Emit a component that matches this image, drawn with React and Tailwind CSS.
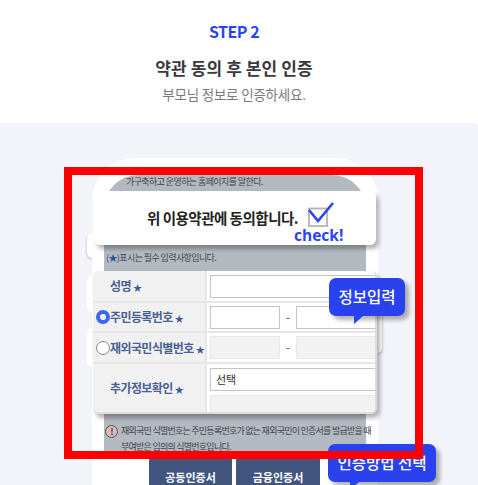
const font = { fontFamily: '"Noto Sans CJK KR", "Noto Sans", sans-serif' };

function Star() {
  return <span className="ml-[2px] text-[9px] text-[#3f5a99]">★</span>;
}

function Bubble({ className, tailClass, children }) {
  return (
    <div className={`absolute flex items-center justify-center rounded-[7px] bg-[#2a42ee] text-[15.5px] font-medium text-white shadow-[4px_4px_4px_rgba(0,0,0,0.3)] ${className}`}>
      {children}
      <span className={`absolute top-full h-0 w-0 border-t-[8px] border-r-[9px] border-t-[#2a42ee] border-r-transparent ${tailClass}`} />
    </div>
  );
}

function FormRow({ label, radio, className, children }) {
  return (
    <div className={`flex border-b-2 border-[#e6e6e6] ${className}`}>
      <div className="flex w-[114px] shrink-0 items-center border-r-2 border-[#e6e6e6] bg-[#f1f1f1] text-[12px] font-bold tracking-[-0.6px] [word-spacing:-2px] text-[#4a6096]">
        {radio === 'on' && <span className="ml-[3px] h-[14px] w-[14px] shrink-0 rounded-full border-[4px] border-[#3b66f6] bg-white" />}
        {radio === 'off' && <span className="ml-[3px] h-[14px] w-[14px] shrink-0 rounded-full border border-[#888] bg-white" />}
        <span className={radio ? '' : 'pl-[17px]'}>{label}<Star /></span>
      </div>
      <div className="min-w-0 flex-1 px-[3px]">{children}</div>
    </div>
  );
}

function IdInputs({ disabled }) {
  const box = disabled ? 'border-[#e8e8e8] bg-[#f2f2f2]' : 'border-[#c4c4c4] bg-white';
  return (
    <div className="flex h-full items-center">
      <div className={`h-[23px] w-[70px] shrink-0 border ${box}`} />
      <span className="w-[16px] shrink-0 text-center text-[11px] text-[#444]">-</span>
      <div className={`h-[23px] w-[80px] shrink-0 border ${box}`} />
    </div>
  );
}

export default function App() {
  return (
    <div className="relative flex h-[485px] w-[478px] flex-col overflow-hidden bg-white" style={font}>
      {/* Heading */}
      <div className="flex h-[123px] w-[468px] shrink-0 flex-col items-center">
        <div className="mt-[20px] text-[16px] leading-[22px] font-bold tracking-[-0.5px] text-[#2a45f0]">STEP 2</div>
        <div className="mt-[14px] text-[17px] leading-[24px] font-bold tracking-[0.1px] text-[#3a3a3e]">약관 동의 후 본인 인증</div>
        <div className="mt-[5px] text-[13.5px] leading-[18px] tracking-[-0.2px] text-[#7a7a7a]">부모님 정보로 인증하세요.</div>
      </div>

      {/* Phone panel */}
      <div className="flex-1 rounded-tr-[4px] bg-[#f3f4f9] pt-[35px]">
        <div className="relative ml-[92px] h-[342px] w-[286px] rounded-t-[42px] bg-white pt-[17px]">
          {/* side buttons */}
          <div className="absolute top-[74px] -left-[5px] h-[26px] w-[6px] rounded-l-[6px] bg-white shadow-[-1px_2px_2px_rgba(0,0,0,0.12)]" />
          <div className="absolute top-[117px] -left-[5px] h-[37px] w-[6px] rounded-l-[6px] bg-white" />
          <div className="absolute top-[169px] -left-[5px] h-[40px] w-[6px] rounded-l-[6px] bg-white" />
          <div className="absolute top-[135px] -right-[4px] h-[60px] w-[5px] rounded-r-[5px] bg-white shadow-[1px_2px_2px_rgba(0,0,0,0.15)]" />

          <div className="mx-[12px] h-[281px] rounded-t-[34px] bg-[#b3b9c0] text-[#3f444b]">
            <div className="h-[16px] pl-[22px] text-[9px] leading-[14px] tracking-[-0.6px]">가구축하고 운영하는 홈페이지를 말한다.</div>

            {/* Agree card */}
            <div className="relative z-10 -mx-[10px] flex h-[54px] items-center rounded-[6px] bg-white pl-[53px] shadow-[3px_4px_4px_rgba(0,0,0,0.3)]">
              <span className="text-[14.5px] font-bold tracking-[-0.5px] text-[#222]">위 이용약관에 동의합니다.</span>
              <svg className="absolute top-[9px] left-[214px]" width="30" height="27" viewBox="0 0 30 27" fill="none">
                <rect x="1" y="8.5" width="18" height="17.5" stroke="#b4b4b4" strokeWidth="1.8" />
                <path d="M1 10l9 11L25 3" stroke="#2a45f0" strokeWidth="2.6" />
              </svg>
              <span className="absolute top-[34px] left-[200px] text-[15.5px] leading-[20px] font-bold text-[#2a45f0]" style={{ fontFamily: '"Open Sans", sans-serif' }}>check!</span>
            </div>

            <div className="flex h-[26px] items-center pl-[2px] text-[9px] tracking-[-0.6px]">
              (<span className="text-[#2f4f9a]">★</span>)표시는 필수 입력사항입니다.
            </div>

            {/* Form card */}
            <div className="relative z-10 -mx-[11px] h-[143px] overflow-hidden rounded-[6px] border-r-2 border-b-2 border-[#dcdcdc] bg-white shadow-[3px_4px_4px_rgba(0,0,0,0.3)]">
              <FormRow label="성명" className="h-[32px]">
                <div className="flex h-full items-center">
                  <div className="h-[23px] w-[180px] shrink-0 border border-[#c4c4c4] bg-white" />
                </div>
              </FormRow>
              <FormRow label="주민등록번호" radio="on" className="h-[30px]">
                <IdInputs />
              </FormRow>
              <FormRow label="재외국민 식별번호" radio="off" className="h-[31px]">
                <IdInputs disabled />
              </FormRow>
              <FormRow label="추가정보확인" className="h-[50px] border-b-0">
                <div className="mt-[4px] flex h-[23px] w-[180px] items-center border border-[#c4c4c4] bg-white pl-[5px] text-[11px] text-[#333]">선택</div>
                <div className="mt-[4px] h-[20px] w-[180px] border border-[#e8e8e8] bg-[#f2f2f2]" />
              </FormRow>
            </div>

            {/* Notice */}
            <div className="flex pt-[9px] pl-[1px] text-[9px] leading-[16px] tracking-[-0.75px] whitespace-nowrap">
              <span className="mr-[3px] flex h-[13px] w-[13px] shrink-0 translate-y-[2px] items-center justify-center rounded-full border-[1.5px] border-[#555] bg-[#d9b8b8] text-[9px] leading-none font-bold text-[#444]">!</span>
              <div>
                재외국민 식별번호는 주민등록번호가 없는 재외국민이 인증서를 발급받을 때
                <br />
                부여받은 임의의 식별번호입니다.
              </div>
            </div>
          </div>

          {/* Certificate buttons */}
          <div className="mt-[1px] ml-[57px] flex gap-[4px]">
            <div className="h-[40px] w-[83px] rounded-t-[3px] bg-[#42557f] pt-[13px] text-center text-[11px] leading-[14px] font-bold text-white">공동인증서</div>
            <div className="h-[40px] w-[84px] rounded-t-[3px] bg-[#42557f] pt-[13px] text-center text-[11px] leading-[14px] font-bold text-white">금융인증서</div>
          </div>
        </div>
      </div>

      <Bubble className="top-[278px] left-[329px] z-20 h-[38px] w-[76px]" tailClass="left-[25px]">정보입력</Bubble>
      <Bubble className="top-[444px] left-[328px] z-20 h-[38px] w-[108px]" tailClass="left-[22px]">인증방법 선택</Bubble>

      {/* Red highlight */}
      <div className="absolute top-[167px] left-[64px] z-30 h-[292px] w-[359px] border-[8px] border-[#ff0000]" />
    </div>
  );
}
